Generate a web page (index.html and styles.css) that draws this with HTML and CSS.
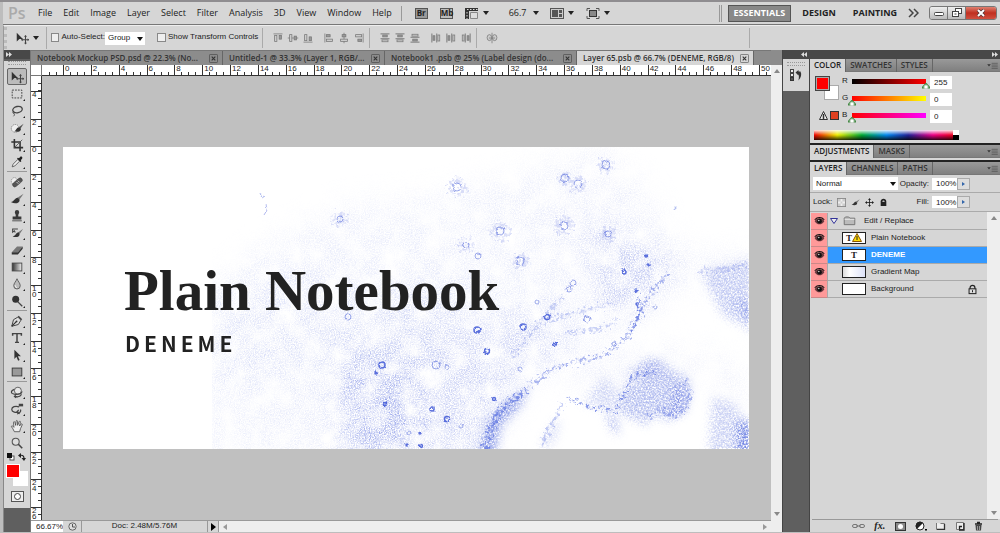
FILE: index.html
```html
<!DOCTYPE html>
<html lang="en">

<head>
  <meta charset="UTF-8">
  <meta name="viewport" content="width=device-width, initial-scale=1.0">
  <title>Layer 65.psb @ 66.7% (DENEME, RGB/8)</title>
  <link rel="stylesheet" href="styles.css">
</head>
<body>
  <!-- icon set -->
  <svg class="sprite" aria-hidden="true">
    <symbol id="i-move" viewBox="0 0 16 16"><path d="M2 2v10l3-3h4z" fill="#333"/><path d="M12 5.500v9M7.500 10h9" stroke="#444" stroke-width="1.200"/><path d="M12 4.500l-1.700 2h3.400zM12 15.500l-1.700-2h3.400zM6.800 10l2-1.700v3.400zM16 10l-1.600-1.700v3.400z" fill="#444"/></symbol>
    <symbol id="i-marquee" viewBox="0 0 16 16"><rect x="2.500" y="3.500" width="11" height="9" fill="none" stroke="#333" stroke-dasharray="2 1.300"/></symbol>
    <symbol id="i-lasso" viewBox="0 0 16 16"><ellipse cx="8.500" cy="6.500" rx="5.500" ry="3.600" fill="none" stroke="#444" stroke-width="1.500" transform="rotate(-12 8 6)"/><path d="M4.500 8.500c-2 1-1 2.500 0 2.300s1.500-1.600 0-1.800M4.500 11c1 1 .5 2-.5 3" fill="none" stroke="#444"/></symbol>
    <symbol id="i-quick" viewBox="0 0 16 16"><circle cx="6" cy="8.500" r="4.500" fill="#eee" stroke="#777" stroke-dasharray="1.500 1"/><path d="M15.500 3l-5.500 4 1.800 2z" fill="#555"/><path d="M10.500 7c-3.500 0-3 4-6 4.500 3.500 2 8 .5 8-2.500z" fill="#333"/></symbol>
    <symbol id="i-crop" viewBox="0 0 16 16"><path d="M5 1v10h10M1.500 4.500H11.500V15" fill="none" stroke="#333" stroke-width="1.800"/><path d="M5 11L14 2" stroke="#555"/></symbol>
    <symbol id="i-eyedrop" viewBox="0 0 16 16"><path d="M2.500 13.500l1-3L9 5l2 2-5.500 5.500z" fill="#eee" stroke="#555"/><path d="M8 4l4 4 1-1-.7-1.200C15 4 14.500 1 12 1.700L10.300 3.700 9 3z" fill="#222"/></symbol>
    <symbol id="i-heal" viewBox="0 0 16 16"><ellipse cx="5" cy="7" rx="3.500" ry="4" fill="#eee" stroke="#888" stroke-dasharray="1.500 1"/><rect x="2" y="6" width="13" height="5" rx="2.500" fill="#555" stroke="#333" stroke-width=".6" transform="rotate(-40 8.500 8.500)"/><path d="M7.500 8l2 2M9 6.500l2 2" stroke="#ddd"/></symbol>
    <symbol id="i-brush" viewBox="0 0 16 16"><path d="M15.500 2L8.500 6.500l2 2.500z" fill="#777"/><path d="M9 6.500c-3.500-.2-3.500 4-8 5 4.500 2.700 10 1.500 10-2.500z" fill="#333"/></symbol>
    <symbol id="i-stamp" viewBox="0 0 16 16"><path d="M6.500 8.500C7 6 5.500 5.500 5.500 3.700a2.500 2.500 0 015 0C10.500 5.500 9 6 9.500 8.500H13V12H3V8.500z" fill="#3a3a3a"/><path d="M2.500 13.500h11" stroke="#444"/></symbol>
    <symbol id="i-history" viewBox="0 0 16 16"><path d="M15 3L9.500 7l1.600 2z" fill="#777"/><path d="M10 7c-3 0-3 3.500-7 5 4 1.500 8 .5 8-3z" fill="#333"/><path d="M2.500 3.500H9M3 3v4l2-1.500 1 2" fill="none" stroke="#444" stroke-width="1.200"/></symbol>
    <symbol id="i-eraser" viewBox="0 0 16 16"><path d="M2 10.500L8 4h6.500L9 10.500z" fill="#777"/><path d="M2 10.500h7v2.500H2zM9 10.500L14.500 4v2.500L9 13z" fill="#333"/></symbol>
    <symbol id="i-gradient" viewBox="0 0 16 16"><linearGradient id="g1"><stop stop-color="#333"/><stop offset="1" stop-color="#eee"/></linearGradient><rect x="2.500" y="3.500" width="11" height="9" fill="url(#g1)" stroke="#444"/></symbol>
    <symbol id="i-drop" viewBox="0 0 16 16"><path d="M8 2c1 3 3.700 5 3.700 8A3.700 3.700 0 018 13.700 3.700 3.700 0 014.300 10C4.300 7 7 5 8 2z" fill="#bbb" stroke="#555"/><path d="M6 9.500c0 1.500.8 2.500 2 2.500" fill="none" stroke="#fff"/></symbol>
    <symbol id="i-dodge" viewBox="0 0 16 16"><circle cx="6.500" cy="6" r="4" fill="#333"/><path d="M9 9l5 5" stroke="#444" stroke-width="1.500"/></symbol>
    <symbol id="i-pen" viewBox="0 0 16 16"><path d="M2 14l2-7.500 5-3 3.500 3.500-3 5z" fill="#ddd" stroke="#333"/><path d="M2 14l5.500-5.500M9.500 2.500l4 4" stroke="#333" stroke-width="1.300"/><circle cx="7.500" cy="8.500" r="1" fill="#333"/></symbol>
    <symbol id="i-type" viewBox="0 0 16 16"><path d="M3 5.500V3h10v2.500M8 3v10M5.700 13h4.600" fill="none" stroke="#444" stroke-width="1.700"/></symbol>
    <symbol id="i-path" viewBox="0 0 16 16"><path d="M5 2v10.500L7.300 10l2 4.500 1.700-.8-2-4.200h3.500z" fill="#333"/></symbol>
    <symbol id="i-shape" viewBox="0 0 16 16"><rect x="2.500" y="3.500" width="11" height="9" fill="#999" stroke="#333"/></symbol>
    <symbol id="i-3d" viewBox="0 0 16 16"><circle cx="9" cy="6.500" r="4" fill="#e8e8e8" stroke="#555"/><path d="M5 5C0 7 1 10 5 10.500c4 .7 8-.5 9-3M12 9c2 2 0 4-3 4.500l-4-.5m1.500-1.500L5 13l2 1.500" fill="none" stroke="#444" stroke-width="1.300"/></symbol>
    <symbol id="i-3dcam" viewBox="0 0 16 16"><path d="M10.500 5.500C6 4 2 5.500 2 8.500s5 4 8 3M12 8.500c1 2-1 4.500-4 5M10 9l-2 2 3 2.500" fill="none" stroke="#444" stroke-width="1.400"/><path d="M10 2h5v3h-5z" fill="#444"/></symbol>
    <symbol id="i-hand" viewBox="0 0 16 16"><path d="M5 14.500C4 12 2.500 10 1.500 8.500c.8-1.200 2-.3 3 1L4 4c0-1.400 1.400-1.200 1.700 0l.8 3.300L7 2.500c.2-1.200 1.500-1 1.600.1l.1 4.600L10.500 3c.6-1 1.700-.5 1.400.6l-1 4.400 1.800-2.200c.8-.8 1.700 0 1.200 1L12 11l-1 3.500z" fill="#eee" stroke="#444" stroke-width=".9"/></symbol>
    <symbol id="i-zoom" viewBox="0 0 16 16"><circle cx="6.500" cy="6.500" r="4" fill="#ddd" stroke="#555" stroke-width="1.200"/><path d="M9.500 9.500l4.500 4.500" stroke="#444" stroke-width="1.800"/></symbol>
    <symbol id="i-alt" viewBox="0 0 16 16"><path d="M2 2.500h12" stroke="#777"/><rect x="3.500" y="4.500" width="3" height="8" fill="#ccc" stroke="#777"/><rect x="9.500" y="4.500" width="3" height="5" fill="#999" stroke="#777"/></symbol>
    <symbol id="i-alm" viewBox="0 0 16 16"><path d="M1 8h14" stroke="#777"/><rect x="3.500" y="3.500" width="3" height="9" fill="#ccc" stroke="#777"/><rect x="9.500" y="5.500" width="3" height="5" fill="#999" stroke="#777"/></symbol>
    <symbol id="i-dist" viewBox="0 0 16 16"><path d="M2 2.500h12M2 9h12" stroke="#777" stroke-width="1.300"/><rect x="5" y="4" width="6" height="2.500" fill="#999" stroke="#777"/><rect x="4" y="10.500" width="8" height="2.500" fill="#ccc" stroke="#777"/></symbol>
    <symbol id="i-auto" viewBox="0 0 16 16"><path d="M8 1v14" stroke="#777"/><ellipse cx="4.500" cy="7.500" rx="3" ry="4" fill="#ccc" stroke="#777"/><ellipse cx="11.500" cy="7.500" rx="3" ry="4" fill="#ccc" stroke="#777"/><path d="M4 8h8" stroke="#777"/></symbol>
    <symbol id="i-eye" viewBox="0 0 16 16"><path d="M1 7.500C4 2 12 2 15 7.500c-3 6-11 6-14 0z" fill="#6b3a3f"/><circle cx="8" cy="7.500" r="3.400" fill="#111"/><circle cx="7" cy="6.500" r="1" fill="#eee"/><path d="M1 5.500C5 1 11 1 15 5.500" fill="none" stroke="#111" stroke-width="1.500"/></symbol>
    <symbol id="i-lock" viewBox="0 0 16 16"><path d="M4.500 8V5.500C4.500 1 11.500 1 11.500 5.500V8" fill="none" stroke="#222" stroke-width="1.800"/><rect x="3" y="7" width="10" height="7" fill="#ddd" stroke="#222" stroke-width="1.500"/><path d="M8 9v3" stroke="#222" stroke-width="1.500"/></symbol>
    <symbol id="i-lockall" viewBox="0 0 16 16"><path d="M3 14V6c0-6 10-6 10 0v8z" fill="#222"/><path d="M6 7V6c0-2 4-2 4 0v1z" fill="#bbb"/></symbol>
    <symbol id="i-cross" viewBox="0 0 16 16"><path d="M8 2v12M2 8h12" stroke="#222" stroke-width="1.500"/><path d="M8 0L5.500 3.500h5zM8 16l-2.500-3.500h5zM0 8l3.500-2.500v5zM16 8l-3.500-2.500v5z" fill="#222"/></symbol>
    <symbol id="i-folder" viewBox="0 0 16 12"><path d="M1.500 10.500v-8L3 1h4l1.500 1.500h6v8z" fill="#bbb" stroke="#666"/><path d="M2 4h12" stroke="#eee"/></symbol>
    <symbol id="i-x" viewBox="0 0 10 10"><rect x=".5" y=".5" width="9" height="9" rx="1" fill="none" stroke="currentColor" opacity=".6"/><path d="M3 3l4 4M7 3L3 7" stroke="currentColor" stroke-width="1.200"/></symbol>
    <symbol id="i-menu" viewBox="0 0 12 8"><path d="M0 2.500h4L2 5z" fill="#333"/><path d="M5 1.500h7M5 3.500h7M5 5.500h7M5 7.500h7" stroke="#555" stroke-width=".8"/></symbol>
  </svg>

  <header class="menubar">
    <span class="logo">Ps</span>
    <nav class="menus">
      <a href="#">File</a>
      <a href="#">Edit</a>
      <a href="#">Image</a>
      <a href="#">Layer</a>
      <a href="#">Select</a>
      <a href="#">Filter</a>
      <a href="#">Analysis</a>
      <a href="#">3D</a>
      <a href="#">View</a>
      <a href="#">Window</a>
      <a href="#">Help</a>
    </nav>
    <div class="appbar">
      <button class="badge">Br</button>
      <button class="badge badge-mb">Mb</button>
      <button class="drop" aria-label="View Extras"><svg width="14" height="13" viewBox="0 0 14 13"><path d="M0 1h13v3H4v8H0z" fill="#333"/><path d="M2 2.500h11" stroke="#ddd" stroke-dasharray="1.500 1.500"/><path d="M2 5v7" stroke="#ddd" stroke-dasharray="1.500 1.500"/><path d="M5.500 5.500h7v6h-7z" fill="#ddd" stroke="#888"/></svg><i class="caret"></i></button>
      <button class="drop zoomlevel">66.7<i class="caret"></i></button>
      <button class="drop" aria-label="Arrange Documents"><svg width="14" height="13" viewBox="0 0 14 13"><rect x=".5" y="1.500" width="13" height="10" fill="#ccc" stroke="#555"/><path d="M2 3h6v7H2zM9 3h3v3H9zM9 7h3v3H9z" fill="#555"/></svg><i class="caret"></i></button>
      <button class="drop" aria-label="Screen Mode"><svg width="14" height="13" viewBox="0 0 14 13"><path d="M1 4V1.500h3M10 1.500h3V4M1 9v2.500h3M10 11.500h3V9" fill="none" stroke="#555"/><rect x="3.500" y="3.500" width="7" height="6" fill="#888" stroke="#333"/></svg><i class="caret"></i></button>
    </div>
    <div class="spaces">
      <button class="space active">ESSENTIALS</button>
      <button class="space">DESIGN</button>
      <button class="space">PAINTING</button>
      <button class="more" aria-label="More workspaces"><svg width="11" height="10" viewBox="0 0 11 10"><path d="M1 1l4 4-4 4M6 1l4 4-4 4" fill="none" stroke="#444" stroke-width="1.500"/></svg></button>
    </div>
    <div class="winbtns">
      <button aria-label="Minimize"><svg width="10" height="8"><rect x=".5" y="3.500" width="9" height="3" rx="1" fill="#fff" stroke="#444"/></svg></button>
      <button aria-label="Restore"><svg width="10" height="10"><rect x="3.500" y=".5" width="6" height="5" fill="#fff" stroke="#444"/><rect x=".5" y="3.500" width="6" height="5" fill="#fff" stroke="#444"/><path d="M2.500 6h2" stroke="#444"/></svg></button>
      <button class="close" aria-label="Close"><svg width="10" height="8"><path d="M2 1l6 6M8 1L2 7" stroke="#533" stroke-width="3.500"/><path d="M2 1l6 6M8 1L2 7" stroke="#fff" stroke-width="2"/></svg></button>
    </div>
  </header>

  <div class="options">
    <div class="opt-tool"><svg width="14" height="14"><use href="#i-move"/></svg><i class="caret"></i></div>
    <label class="check auto"><input type="checkbox">Auto-Select:</label>
    <span class="pick group"><select aria-label="Auto-Select target"><option>Group</option><option>Layer</option></select></span>
    <label class="check"><input type="checkbox">Show Transform Controls</label>
    <div class="align">
      <svg><use href="#i-alt"/></svg>
      <svg><use href="#i-alm"/></svg>
      <svg class="flip"><use href="#i-alt"/></svg>
    </div>
    <div class="align plain">
      <svg class="left"><use href="#i-alt"/></svg>
      <svg class="left"><use href="#i-alm"/></svg>
      <svg class="right"><use href="#i-alt"/></svg>
    </div>
    <div class="align">
      <svg><use href="#i-dist"/></svg>
      <svg><use href="#i-dist"/></svg>
      <svg class="flip"><use href="#i-dist"/></svg>
    </div>
    <div class="align plain">
      <svg class="left"><use href="#i-dist"/></svg>
      <svg class="left"><use href="#i-dist"/></svg>
      <svg class="right"><use href="#i-dist"/></svg>
    </div>
    <div class="align"><svg><use href="#i-auto"/></svg></div>
    <div class="opt-end"></div>
  </div>

  <main class="main">
    <aside class="tools">
      <div class="strip"><svg width="6" height="5"><path d="M0 0l3 2.500L0 5zM3 0l3 2.500L3 5z" fill="#ddd"/></svg></div>
      <div class="toolbox">
        <div class="grip"></div>
        <button class="tool active" aria-label="Move"><svg><use href="#i-move"/></svg></button>
        <button class="tool" aria-label="Marquee"><svg><use href="#i-marquee"/></svg></button>
        <button class="tool" aria-label="Lasso"><svg><use href="#i-lasso"/></svg></button>
        <button class="tool" aria-label="Quick Selection"><svg><use href="#i-quick"/></svg></button>
        <button class="tool" aria-label="Crop"><svg><use href="#i-crop"/></svg></button>
        <button class="tool" aria-label="Eyedropper"><svg><use href="#i-eyedrop"/></svg></button>
        <hr>
        <button class="tool" aria-label="Healing Brush"><svg><use href="#i-heal"/></svg></button>
        <button class="tool" aria-label="Brush"><svg><use href="#i-brush"/></svg></button>
        <button class="tool" aria-label="Clone Stamp"><svg><use href="#i-stamp"/></svg></button>
        <button class="tool" aria-label="History Brush"><svg><use href="#i-history"/></svg></button>
        <button class="tool" aria-label="Eraser"><svg><use href="#i-eraser"/></svg></button>
        <button class="tool" aria-label="Gradient"><svg><use href="#i-gradient"/></svg></button>
        <button class="tool" aria-label="Blur"><svg><use href="#i-drop"/></svg></button>
        <button class="tool" aria-label="Dodge"><svg><use href="#i-dodge"/></svg></button>
        <hr>
        <button class="tool" aria-label="Pen"><svg><use href="#i-pen"/></svg></button>
        <button class="tool" aria-label="Type"><svg><use href="#i-type"/></svg></button>
        <button class="tool" aria-label="Path Selection"><svg><use href="#i-path"/></svg></button>
        <button class="tool" aria-label="Rectangle"><svg><use href="#i-shape"/></svg></button>
        <hr>
        <button class="tool" aria-label="3D Rotate"><svg><use href="#i-3d"/></svg></button>
        <button class="tool" aria-label="3D Orbit"><svg><use href="#i-3dcam"/></svg></button>
        <button class="tool" aria-label="Hand"><svg><use href="#i-hand"/></svg></button>
        <button class="tool last" aria-label="Zoom"><svg><use href="#i-zoom"/></svg></button>
        <div class="mini">
          <svg width="8" height="8"><rect x="3" y="3" width="4" height="4" fill="#fff" stroke="#555"/><rect width="5" height="5" fill="#111"/></svg>
          <svg width="8" height="8"><path d="M2 2.500c3-1 4 1 4 3" fill="none" stroke="#222" stroke-width="1.200"/><path d="M0 2.500L3 0v5zM3.500 5h4.500L6 8z" fill="#222"/></svg>
        </div>
        <div class="inks"><i class="bg"></i><i class="fg"></i></div>
        <button class="mask" aria-label="Quick Mask"><svg width="13" height="11"><rect x=".5" y=".5" width="12" height="10" fill="#eee" stroke="#555"/><circle cx="6.500" cy="5.500" r="3" fill="#fff" stroke="#444"/></svg></button>
      </div>
    </aside>

    <section class="editor">
      <div class="tabs">
        <div class="tab wide">Notebook Mockup PSD.psd @ 22.3% (No...<svg><use href="#i-x"/></svg></div>
        <div class="tab">Untitled-1 @ 33.3% (Layer 1, RGB/...<svg><use href="#i-x"/></svg></div>
        <div class="tab wide">Notebook1 .psb @ 25% (Label design (do...<svg><use href="#i-x"/></svg></div>
        <div class="tab mid active">Layer 65.psb @ 66.7% (DENEME, RGB/8)<svg><use href="#i-x"/></svg></div>
      </div>
      <div class="stage">
        <div class="corner"></div>
        <div class="ruler-x"><span></span><span>0</span><span>2</span><span>4</span><span>6</span><span>8</span><span>10</span><span>12</span><span>14</span><span>16</span><span>18</span><span>20</span><span>22</span><span>24</span><span>26</span><span>28</span><span>30</span><span>32</span><span>34</span><span>36</span><span>38</span><span>40</span><span>42</span><span>44</span><span>46</span><span>48</span><span>50</span></div>
        <div class="ruler-y"><span></span><span>4</span><span>2</span><span>0</span><span>2</span><span>4</span><span>6</span><span>8</span><span>10</span><span>12</span><span>14</span><span>16</span><span>18</span><span>20</span><span>22</span><span>24</span><span>26</span></div>
        <div class="pasteboard">
          <div class="paper">
            <svg class="wash" viewBox="0 0 686 302" preserveAspectRatio="xMidYMid slice" aria-hidden="true">
              <defs>
                <filter id="soft" x="0" y="0" width="686" height="302" filterUnits="userSpaceOnUse" color-interpolation-filters="sRGB">
                  <feGaussianBlur in="SourceGraphic" stdDeviation="15" result="b"/>
                  <feTurbulence type="fractalNoise" baseFrequency=".8" numOctaves="3" seed="4"/>
                  <feColorMatrix values="0 0 0 0 1  0 0 0 0 1  0 0 0 0 1  2.200 0 0 0 -.7" result="n"/>
                  <feTurbulence type="fractalNoise" baseFrequency=".05" numOctaves="4" seed="9"/>
                  <feColorMatrix values="0 0 0 0 1  0 0 0 0 1  0 0 0 0 1  2 0 0 0 -.3" result="c"/>
                  <feComposite in="b" in2="n" operator="in" result="d"/>
                  <feComposite in="d" in2="c" operator="in"/>
                </filter>
                <filter id="firm" x="0" y="0" width="686" height="302" filterUnits="userSpaceOnUse" color-interpolation-filters="sRGB">
                  <feGaussianBlur in="SourceGraphic" stdDeviation="5" result="b"/>
                  <feTurbulence type="fractalNoise" baseFrequency=".6" numOctaves="3" seed="7" result="t"/>
                  <feColorMatrix values="0 0 0 0 1  0 0 0 0 1  0 0 0 0 1  2.400 0 0 0 -.6" result="n"/>
                  <feDisplacementMap in="b" in2="t" scale="8" xChannelSelector="R" yChannelSelector="G" result="d"/>
                  <feComposite in="d" in2="n" operator="in"/>
                </filter>
                <filter id="edge" x="0" y="0" width="686" height="302" filterUnits="userSpaceOnUse" color-interpolation-filters="sRGB">
                  <feTurbulence type="fractalNoise" baseFrequency=".3" numOctaves="3" seed="3" result="t"/>
                  <feColorMatrix values="0 0 0 0 1  0 0 0 0 1  0 0 0 0 1  0 4 0 0 -1.500" result="n"/>
                  <feDisplacementMap in="SourceGraphic" in2="t" scale="12" xChannelSelector="R" yChannelSelector="B" result="d"/>
                  <feComposite in="d" in2="n" operator="in"/>
                  <feGaussianBlur stdDeviation=".6"/>
                </filter>
                <filter id="wobble" x="0" y="0" width="686" height="302" filterUnits="userSpaceOnUse">
                  <feTurbulence type="fractalNoise" baseFrequency=".3" numOctaves="2" seed="5" result="t"/>
                  <feDisplacementMap in="SourceGraphic" in2="t" scale="3" xChannelSelector="R" yChannelSelector="G"/>
                  <feGaussianBlur stdDeviation=".4"/>
                </filter>
                <clipPath id="sheet"><path d="M149 0H686V302H149z"/></clipPath>
              </defs>
              <g clip-path="url(#sheet)">
                <g filter="url(#soft)" fill="#6477e0">
                  <path d="M140 150L200 100 280 60 380 50 540 0 580 40 610 100 590 140 540 200 450 240 420 310H250L140 310z" opacity=".14"/>
                  <path d="M140 150L230 120 330 140 400 200 300 230 140 230z" opacity=".1"/>
                  <path d="M310 185L430 180 480 150 500 190 450 240 425 310H285L275 245z" opacity=".26"/>
                  <path d="M280 200L340 230 370 310H275z" opacity=".45"/>
                  <ellipse cx="372" cy="155" rx="35" ry="10" opacity=".45"/>
                  <path d="M520 80L570 95 610 110 590 160 550 170 535 130z" opacity=".38"/>
                  <path d="M600 112h86v20h-86z" opacity=".25"/>
                  <path d="M480 225l110-20 70 5 26 40v20L640 220 560 240z" opacity=".18"/>
                </g>
                <g filter="url(#firm)" fill="#4f66dc">
                  <path d="M640 126L690 112V182L660 168z" opacity=".34"/>
                  <path d="M672 150L690 155V188z" opacity=".45"/>
                  <path d="M560 242L600 216 628 234 624 262 606 274 590 266 585 278 558 266z" opacity=".42"/>
                  <path d="M612 235l15 10-6 20-13 6z" opacity=".45"/>
                  <path d="M415 310L425 275 440 257 466 240 458 258 438 278 431 310z" opacity=".7"/>
                  <path d="M646 310L650 250 670 255 690 285V310z" opacity=".3"/>
                  <path d="M675 275h15v35h-14z" opacity=".8"/>
                  <path d="M520 256l20-26 8 4 14 24-12 6z" opacity=".25"/>
                  <path d="M543 265l10 6 4 18-8-8z" opacity=".6"/>
                  <path d="M478 300l12-24 8-4-4 18-10 12z" opacity=".25"/>
                  <path d="M560 228l28-16 14 3-16 12z" opacity=".5"/>
                </g>
                <g filter="url(#edge)" fill="none" stroke="#5a70e0">
                  <path d="M422 304C428 272 440 252 466 244" stroke-width="6" opacity=".7"/>
                  <path d="M466 240C485 222 500 216 525 213 550 207 570 190 577 165 585 150 590 140 604 128" stroke-width="4" opacity=".5"/>
                  <path d="M575 150C580 160 576 175 566 183" stroke-width="5" opacity=".6"/>
                  <path d="M505 252C520 254 526 264 535 260L552 265 562 245 568 232 592 224" stroke-width="3" opacity=".7"/>
                  <path d="M622 232C632 245 626 262 610 270L596 262 586 270" stroke-width="4" opacity=".5"/>
                  <path d="M480 176C500 165 530 165 550 155M500 188C520 180 540 190 555 170" stroke-width="4" opacity=".3"/>
                  <path d="M450 210C465 190 480 168 500 150" stroke-width="4" opacity=".3"/>
                  <path d="M500 255L490 275 478 300" stroke-width="4" opacity=".35"/>
                  <path d="M635 125l50-6" stroke-width="6" opacity=".25"/>
                  <g stroke-width="6" opacity=".22">
                    <circle cx="394" cy="40" r="7"/><circle cx="277" cy="72" r="5"/><circle cx="403" cy="98" r="5"/><circle cx="502" cy="31" r="4"/><circle cx="515" cy="37" r="6"/><circle cx="501" cy="79" r="7"/><circle cx="437" cy="85" r="7"/><circle cx="458" cy="114" r="5"/><circle cx="543" cy="18" r="5"/><circle cx="545" cy="87" r="5"/>
                  </g>
                </g>
                <g filter="url(#wobble)" fill="none" stroke="#3d56d6">
                  <path d="M197 46l2 5 3-2M203 57l1 6-3 5" opacity=".4"/>
                  <g opacity=".5">
                    <circle cx="394" cy="40" r="4"/><circle cx="277" cy="72" r="3"/><circle cx="403" cy="98" r="3"/><circle cx="502" cy="31" r="4"/><circle cx="515" cy="37" r="4"/><circle cx="501" cy="79" r="4"/><circle cx="437" cy="84" r="4"/><circle cx="457" cy="114" r="4"/><circle cx="543" cy="18" r="4"/><circle cx="545" cy="87" r="3"/><circle cx="415" cy="109" r="3"/><circle cx="474" cy="155" r="2"/><circle cx="524" cy="172" r="3"/><circle cx="373" cy="218" r="4"/><circle cx="384" cy="220" r="2"/><circle cx="398" cy="279" r="2"/><circle cx="346" cy="286" r="2"/><circle cx="506" cy="142" r="3"/><circle cx="510" cy="136" r="3"/><circle cx="457" cy="222" r="2"/><circle cx="551" cy="197" r="2"/><circle cx="612" cy="61" r="1"/><circle cx="285" cy="170" r="3"/><circle cx="592" cy="160" r="2"/>
                  </g>
                  <g stroke-width="1.500" opacity=".85">
                    <circle cx="319" cy="218" r="3"/><circle cx="313" cy="226" r="1"/><circle cx="322" cy="257" r="1.500"/><circle cx="369" cy="262" r="2"/><circle cx="384" cy="272" r="2.500"/><circle cx="414" cy="183" r="3"/><circle cx="358" cy="299" r="1.500"/><circle cx="344" cy="298" r="1"/><circle cx="424" cy="204" r="2.500"/><circle cx="460" cy="180" r="3"/><circle cx="484" cy="170" r="2.500"/><circle cx="492" cy="197" r="1.500"/><circle cx="561" cy="125" r="2"/><circle cx="573" cy="144" r="1"/><circle cx="583" cy="109" r="1"/><circle cx="585" cy="118" r="1"/><circle cx="431" cy="252" r="1.500"/><circle cx="357" cy="286" r="1"/><circle cx="574" cy="157" r="1"/>
                  </g>
                </g>
              </g>
            </svg>
            <h1>Plain Notebook</h1>
            <p>DENEME</p>
          </div>
        </div>
      </div>
      <div class="status">
        <input class="percent" type="text" value="66.67%" aria-label="Zoom">
        <span class="clock"><svg width="9" height="9"><circle cx="4.500" cy="4.500" r="3.700" fill="#ddd" stroke="#666"/><path d="M4.500 2v3h2.500" fill="none" stroke="#555"/></svg></span>
        <span class="docsize">Doc: 2.48M/5.76M</span>
        <button class="play" aria-label="Status options"><svg width="5" height="8"><path d="M0 0l5 4-5 4z"/></svg></button>
        <div class="hscroll"><svg width="4" height="6"><path d="M4 0L0 3l4 3z" fill="#999"/></svg><svg width="4" height="6"><path d="M0 0l4 3-4 3z" fill="#999"/></svg></div>
      </div>
    </section>

    <div class="vscroll"><svg width="6" height="4"><path d="M0 4l3-4 3 4z" fill="#888"/></svg><svg width="6" height="4"><path d="M0 0h6L3 4z" fill="#888"/></svg></div>

    <aside class="dock">
      <div class="strip"><svg width="6" height="5"><path d="M3 0L0 2.500 3 5zM6 0L3 2.500 6 5z" fill="#ddd"/></svg><svg width="6" height="5"><path d="M0 0l3 2.500L0 5zM3 0l3 2.500L3 5z" fill="#ddd"/></svg></div>
      <div class="dock-body">
        <div class="iconbar">
          <div class="iconbox">
            <div class="grip"></div>
            <button aria-label="History"><svg width="12" height="13"><rect x=".5" y=".5" width="3" height="3" fill="#eee" stroke="#444"/><rect x=".5" y="4.500" width="3" height="3" fill="#eee" stroke="#444"/><rect x=".5" y="8.500" width="3" height="3" fill="#555" stroke="#333"/><path d="M5.500 3.500L8.500 1v1.500h2c1.500 3 .5 6-2 9 .5-3 .5-5 0-6.500v1.500z" fill="#333"/></svg></button>
          </div>
        </div>
        <div class="panels">
          <section class="panel">
            <div class="ptabs"><button class="on">COLOR</button><button>SWATCHES</button><button>STYLES</button><svg><use href="#i-menu"/></svg></div>
            <div class="color">
              <div class="chips">
                <div class="pair"><i class="back"></i><i class="front"></i></div>
                <div class="warn"><svg width="9" height="9"><path d="M4.500 .500L8.500 8.500H.500z" fill="#eee" stroke="#333"/><path d="M4.500 3v5" stroke="#333" stroke-width="1.500"/></svg><i></i></div>
              </div>
              <div class="channels">
                <label for="r">R</label><input id="r" class="red" type="range" max="255" value="255"><input type="text" value="255" aria-label="R value">
                <label for="g">G</label><input id="g" class="green" type="range" max="255" value="0"><input type="text" value="0" aria-label="G value">
                <label for="b">B</label><input id="b" class="blue" type="range" max="255" value="0"><input type="text" value="0" aria-label="B value">
              </div>
            </div>
            <div class="spectrum"><i></i></div>
          </section>
          <section class="panel closed">
            <div class="ptabs"><button class="on">ADJUSTMENTS</button><button>MASKS</button><svg><use href="#i-menu"/></svg></div>
          </section>
          <section class="panel layers">
            <div class="ptabs"><button class="on">LAYERS</button><button>CHANNELS</button><button>PATHS</button><svg><use href="#i-menu"/></svg></div>
            <div class="lrow">
              <span class="pick blend"><select aria-label="Blend mode"><option>Normal</option><option>Multiply</option></select></span>
              <label for="opacity">Opacity:</label>
              <input id="opacity" type="text" value="100%"><button class="step" aria-label="Opacity slider"><i></i></button>
            </div>
            <div class="lrow locks">
              <span>Lock:</span>
              <svg viewBox="0 0 10 10"><rect x=".5" y=".5" width="9" height="9" fill="#eee" stroke="#888"/><path d="M1 1h3v3H1zM6 1h3v3H6zM4 4h2v2H4zM1 6h3v3H1zM6 6h3v3H6z" fill="#ccc"/></svg>
              <svg><use href="#i-brush"/></svg>
              <svg><use href="#i-cross"/></svg>
              <svg><use href="#i-lockall"/></svg>
              <label for="fill">Fill:</label>
              <input id="fill" type="text" value="100%"><button class="step" aria-label="Fill slider"><i></i></button>
            </div>
            <div class="list">
              <ul>
                <li><span class="eye"><svg><use href="#i-eye"/></svg></span><div class="layer folder"><svg width="8" height="6"><path d="M.5 .5h7L4 5.500z" fill="#eee" stroke="#339"/></svg><svg class="fold"><use href="#i-folder"/></svg>Edit / Replace</div></li>
                <li><span class="eye"><svg><use href="#i-eye"/></svg></span><div class="layer"><span class="thumb">T<svg width="10" height="9"><path d="M5 .500L9.500 8.500H.500z" fill="#fd0" stroke="#850"/><path d="M5 3v4" stroke="#222"/></svg></span>Plain Notebook</div></li>
                <li class="sel"><span class="eye"><svg><use href="#i-eye"/></svg></span><div class="layer"><span class="thumb">T</span>DENEME</div></li>
                <li><span class="eye"><svg><use href="#i-eye"/></svg></span><div class="layer"><span class="thumb map"></span>Gradient Map</div></li>
                <li><span class="eye"><svg><use href="#i-eye"/></svg></span><div class="layer"><span class="thumb"></span>Background<svg class="lock"><use href="#i-lock"/></svg></div></li>
              </ul>
              <div class="lscroll"><svg width="6" height="4"><path d="M0 4l3-4 3 4z" fill="#888"/></svg><svg width="6" height="4"><path d="M0 0h6L3 4z" fill="#888"/></svg></div>
            </div>
            <div class="lfoot">
              <button aria-label="Link layers"><svg width="13" height="8"><rect x=".5" y="2.500" width="5" height="3" rx="1.500" fill="none" stroke="#777"/><rect x="7.500" y="2.500" width="5" height="3" rx="1.500" fill="none" stroke="#777"/><path d="M4 4h5" stroke="#777"/></svg></button>
              <button class="fx">fx.</button>
              <button aria-label="Add mask"><svg width="11" height="9"><rect x=".5" y=".5" width="10" height="8" fill="#888" stroke="#333"/><circle cx="5.500" cy="4.500" r="2.500" fill="#fff"/></svg></button>
              <button aria-label="Adjustment layer"><svg width="12" height="10"><circle cx="5" cy="5" r="4" fill="#fff" stroke="#222"/><path d="M2 8A4 4 0 018 2z" fill="#222"/><path d="M10 8h2v1.500h-2z"/></svg></button>
              <button aria-label="New group"><svg width="10" height="8"><path d="M.5 1v6.500h8V1.500h-4" fill="#eee" stroke="#777"/><path d="M8.500 2v5.500H1" fill="none" stroke="#333" stroke-width="1.300"/></svg></button>
              <button aria-label="New layer"><svg width="9" height="9"><path d="M.5 .5h7v7h-7z" fill="#eee" stroke="#777"/><path d="M3 8h5V1M3.500 7V4.500H6" fill="none" stroke="#222" stroke-width="1.300"/></svg></button>
              <button aria-label="Delete"><svg width="9" height="10"><path d="M1 3h7M3 1.500h3" stroke="#222" stroke-width="1.300"/><path d="M1.500 4h6L7 9.500H2z" fill="#444"/><path d="M3.500 5v4M5.500 5v4" stroke="#bbb" stroke-width=".7"/></svg></button>
            </div>
          </section>
        </div>
      </div>
    </aside>
  </main>
</body>
</html>
```
FILE: styles.css
```css
* {
  box-sizing: border-box;
}

body {
  margin: 0;
  height: 100vh;
  display: flex;
  flex-direction: column;
  overflow: hidden;
  padding: 0 0 1px 3px;
  border-top: 2px solid #8f8d90;
  background: #bdbdbd;
  color: #222;
  font: 8px/10px "Liberation Sans", Arial, sans-serif;
}

button,
input,
select {
  font: inherit;
  color: inherit;
  margin: 0;
  padding: 0;
  border: 0;
  background: none;
  border-radius: 0;
  appearance: none;
}

a {
  color: inherit;
  text-decoration: none;
}

svg {
  flex: none;
  display: block;
}

.sprite {
  position: absolute;
  width: 0;
  height: 0;
}

.caret {
  border: 3px solid transparent;
  border-top: 4px solid #222;
  border-bottom: 0;
}

/* menu bar */
.menubar {
  height: 23px;
  flex: none;
  display: flex;
  align-items: center;
  background: #d6d6d6;
  border-bottom: 1px solid #777;
  font-family: "Open Sans", sans-serif;
  font-size: 9px;
}

.logo {
  width: 35px;
  padding-left: 5px;
  font-size: 16px;
  font-weight: 600;
  color: #aaa;
}

.menus {
  display: flex;
  gap: 11px;
}

.appbar {
  display: flex;
  align-items: center;
  height: 15px;
  margin-left: 9px;
  padding-left: 13px;
  border-left: 1px solid #999;
}

.badge {
  width: 13px;
  height: 11px;
  margin-right: 12px;
  border: 1px solid #555;
  background: #999;
  font-size: 8px;
  line-height: 8px;
  font-weight: bold;
}

.badge-mb {
  background: #bbb;
}

.drop {
  display: flex;
  align-items: center;
  gap: 4px;
  margin-right: 12px;
}

.zoomlevel {
  gap: 7px;
  margin: 0 11px 0 8px;
}

.spaces {
  display: flex;
  align-items: center;
  height: 17px;
  margin-left: auto;
  padding-left: 6px;
  border-left: 3px double #999;
  font-weight: bold;
}

.space {
  height: 17px;
  padding: 0 6px;
  margin-right: 5px;
}

.space.active {
  border: 1px solid #555;
  background: #888;
  color: #fff;
  padding: 0 5px;
}

.more {
  margin-right: 10px;
}

.winbtns {
  display: flex;
  margin-right: 3px;
  border: 1px solid #777;
  border-radius: 3px;
  overflow: hidden;
}

.winbtns button {
  width: 18px;
  height: 12px;
  display: grid;
  place-items: center;
  background: linear-gradient(#eee, #bbb);
  border-right: 1px solid #777;
}

.winbtns .close {
  width: 30px;
  border: 0;
  background: linear-gradient(#e08070, #c03020 50%, #d05040);
}

/* options bar */
.options {
  height: 25px;
  flex: none;
  display: flex;
  align-items: center;
  background: #d6d6d6;
  border-top: 1px solid #eee;
  border-left: 1px solid #999;
}

.opt-tool {
  height: 22px;
  width: 43px;
  display: flex;
  align-items: center;
  gap: 4px;
  padding-left: 8px;
  border-left: 3px dotted #bbb;
  border-right: 1px solid #aaa;
}

.check {
  display: flex;
  align-items: center;
  gap: 2px;
  padding-bottom: 2px;
  white-space: nowrap;
}

.check.auto {
  width: 54px;
  margin-left: 4px;
}

.check input {
  width: 9px;
  height: 9px;
  border: 1px solid #888;
  background: #eee;
}

.pick {
  position: relative;
}

.pick select {
  width: 100%;
  height: 100%;
  display: block;
  padding-left: 3px;
  background: #fff;
}

.pick::after {
  content: "";
  position: absolute;
  right: 2px;
  top: 5px;
  border: 3px solid transparent;
  border-top: 4px solid #111;
  border-bottom: 0;
}

.group {
  width: 40px;
  height: 13px;
  margin-right: 12px;
}

.align {
  height: 20px;
  display: flex;
  align-items: center;
  gap: 3px;
  margin-left: 4px;
  padding-left: 9px;
  border-left: 1px solid #aaa;
}

.align.plain {
  margin: 0;
  border: 0;
}

.align svg {
  width: 12px;
  height: 12px;
}

.align .flip {
  transform: scaleY(-1);
}

.align .left {
  transform: rotate(-90deg);
}

.align .right {
  transform: rotate(90deg);
}

.opt-end {
  width: 251px;
  height: 20px;
  margin-left: auto;
  border-left: 1px solid #aaa;
}

/* work area */
.main {
  flex: 1;
  min-height: 0;
  display: flex;
}

.strip {
  height: 9px;
  flex: none;
  display: flex;
  align-items: center;
  background: #484848;
}

.grip {
  height: 4px;
  margin: 2px 4px 3px;
  border-top: 1px dotted #999;
  border-bottom: 1px dotted #999;
}

.tools {
  width: 28px;
  flex: none;
  border-left: 1px solid #888;
  border-right: 1px solid #777;
  background: #5f5f5f;
}

.tools .strip {
  padding-left: 2px;
}

.toolbox {
  background: #d6d6d6;
  padding-bottom: 6px;
}

.tool {
  position: relative;
  width: 20px;
  height: 17px;
  display: grid;
  place-items: center;
  margin: 0 auto;
}

.tool svg {
  width: 14px;
  height: 14px;
}

.tool::after {
  content: "";
  position: absolute;
  right: 2px;
  bottom: 1px;
  border: 1px solid #222;
  border-top-color: transparent;
  border-left-color: transparent;
}

.tool.active {
  border: 1px solid #666;
  border-radius: 2px;
  background: #bbb;
}

.tool.active::after,
.tool.last::after {
  content: none;
}

.toolbox hr {
  height: 1px;
  margin: 1px 3px;
  border: 0;
  background: #999;
}

.mini {
  display: flex;
  justify-content: space-between;
  padding: 2px 4px 2px 3px;
}

.inks,
.pair {
  display: grid;
  grid-template-columns: 7px 7px 8px;
  grid-template-rows: 7px 7px 8px;
  margin: 1px 0 4px 2px;
}

.inks .bg,
.pair .back {
  grid-area: 2 / 2 / 4 / 4;
  background: #fff;
}

.inks .fg,
.pair .front {
  grid-area: 1 / 1 / 3 / 3;
  background: #f00;
  border: 1px solid #fff;
}

.mask {
  display: block;
  margin: 5px auto 0;
}

/* document window */
.editor {
  flex: 1;
  min-width: 0;
  display: flex;
  flex-direction: column;
}

.tabs {
  height: 15px;
  flex: none;
  display: flex;
  background: #8c8c8c;
  border-top: 1px solid #777;
  font-family: "Open Sans", sans-serif;
}

.tab {
  width: 162px;
  display: flex;
  align-items: center;
  justify-content: space-between;
  padding: 0 4px 0 6px;
  border-right: 1px solid #666;
  font-weight: 600;
  color: #333;
  white-space: nowrap;
}

.tab.wide {
  width: 192px;
}

.tab.mid {
  width: 177px;
}

.tab svg {
  width: 9px;
  height: 9px;
}

.tab.active {
  background: #d6d6d6;
}

.stage {
  flex: 1;
  min-height: 0;
  display: grid;
  grid-template-columns: 11px 1fr;
  grid-template-rows: 11px 1fr;
}

.corner {
  background: #fff;
  border-right: 1px solid #777;
  border-bottom: 1px solid #777;
}

.ruler-x,
.ruler-y {
  display: grid;
  background: #fff;
  font-size: 8px;
  line-height: 7px;
}

.ruler-x {
  grid-template-columns: 21px repeat(25, 1fr) 12px;
  border-bottom: 1px solid #333;
}

.ruler-x span {
  min-width: 0;
  padding-left: 1px;
  border-left: 1px solid #333;
  background: repeating-linear-gradient(to right, transparent 0 6px, #333 6px 7px) 0 100% / 100% 3px no-repeat;
}

.ruler-y {
  grid-template-rows: 15px repeat(15, 1fr) 13px;
  line-height: 6px;
  border-right: 1px solid #333;
}

.ruler-y span {
  min-height: 0;
  padding: 0 4px 0 1px;
  border-top: 1px solid #333;
  background: repeating-linear-gradient(to bottom, transparent 0 6px, #333 6px 7px) 100% 0 / 3px 100% no-repeat;
  word-break: break-all;
}

.ruler-x span:first-child,
.ruler-y span:first-child {
  border-color: transparent;
}

.pasteboard {
  display: flex;
  padding: 71px 22px 71px 21px;
  background: #c0c0c0;
}

.paper {
  position: relative;
  flex: 1;
  padding: 112px 0 0 61px;
  background: #fff;
  overflow: hidden;
}

.wash {
  position: absolute;
  inset: 0;
  width: 100%;
  height: 100%;
}

.paper h1,
.paper p {
  position: relative;
  margin: 0;
  color: #222;
}

.paper h1 {
  font: bold 57px/64px "Liberation Serif", serif;
}

.paper p {
  margin-top: 5px;
  padding-left: 1px;
  font: 700 21px/30px "Noto Sans CJK SC", sans-serif;
  letter-spacing: 4px;
}

.status {
  height: 12px;
  flex: none;
  display: flex;
  background: #d6d6d6;
  border-top: 1px solid #999;
}

.status .percent {
  width: 32px;
  padding-left: 5px;
  background: #fff;
}

.clock {
  width: 19px;
  display: grid;
  place-items: center;
  border-right: 1px solid #999;
}

.docsize {
  width: 125px;
  text-align: center;
}

.play {
  width: 12px;
  display: grid;
  place-items: center;
  border-left: 1px solid #999;
  border-right: 1px solid #999;
}

.hscroll {
  flex: 1;
  display: flex;
  align-items: center;
  justify-content: space-between;
  padding: 0 4px;
  background: #eee;
}

.vscroll,
.lscroll {
  width: 11px;
  flex: none;
  display: flex;
  flex-direction: column;
  align-items: center;
  justify-content: space-between;
  background: #eee;
}

.vscroll {
  padding: 4px 0 16px;
  border-top: 15px solid #8c8c8c;
}

/* right dock */
.dock {
  width: 218px;
  flex: none;
  display: flex;
  flex-direction: column;
  border-left: 1px solid #444;
}

.dock .strip {
  justify-content: space-between;
  padding: 0 2px 0 18px;
}

.dock-body {
  flex: 1;
  min-height: 0;
  display: flex;
}

.iconbar {
  width: 27px;
  background: #5f5f5f;
  border-right: 1px solid #444;
}

.iconbox {
  height: 32px;
  padding-top: 1px;
  background: #d6d6d6;
}

.iconbox button {
  display: block;
  margin: 0 auto;
}

.panels {
  flex: 1;
  display: flex;
  flex-direction: column;
  gap: 2px;
  background: #222;
}

.panel {
  background: #d6d6d6;
}

.panel.closed {
  padding-bottom: 2px;
}

.ptabs {
  height: 13px;
  display: flex;
  align-items: center;
  background: linear-gradient(#999, #808080);
  border-bottom: 1px solid #777;
  font-family: "Open Sans", sans-serif;
}

.ptabs button {
  height: 13px;
  padding: 0 4px;
  border-right: 1px solid #666;
  font-weight: 600;
  color: #333;
}

.ptabs .on {
  background: #d6d6d6;
  color: #222;
}

.ptabs svg {
  width: 11px;
  height: 7px;
  margin: 0 2px 0 auto;
}

.color {
  display: flex;
  padding: 4px 0 3px 5px;
}

.chips {
  width: 27px;
}

.pair {
  grid-template-columns: 9px 6px 9px;
  grid-template-rows: 9px 6px 9px;
  margin: 0;
}

.pair .front {
  border: 1px solid #444;
  outline: 1px solid #aaa;
  outline-offset: -2px;
}

.pair .back {
  border: 1px solid #aaa;
}

.warn {
  display: flex;
  gap: 2px;
  margin: 11px 0 0 4px;
}

.warn i {
  width: 9px;
  height: 9px;
  background: #e04020;
  border: 1px solid #333;
}

.channels {
  display: grid;
  grid-template-columns: 6px 82px 22px;
  grid-auto-rows: 17px;
  align-items: start;
}

.channels input[type=text] {
  height: 13px;
  padding-left: 4px;
  background: #fff;
}

.channels input[type=range] {
  width: 82px;
  height: 14px;
}

.channels input::-webkit-slider-runnable-track {
  height: 11px;
  background-image: linear-gradient(to right, #000, #f00);
  background-size: calc(100% - 8px) 5px;
  background-position: 4px 1px;
  background-repeat: no-repeat;
}

.channels .green::-webkit-slider-runnable-track {
  background-image: linear-gradient(to right, #f00, #ff0);
}

.channels .blue::-webkit-slider-runnable-track {
  background-image: linear-gradient(to right, #f00, #f0f);
}

.channels input::-webkit-slider-thumb {
  appearance: none;
  width: 8px;
  height: 6px;
  margin-top: 5px;
  background: radial-gradient(circle at 4px 4px, #fff 1px, #484 3px);
  clip-path: polygon(50% 0, 100% 70%, 100% 100%, 0 100%, 0 70%);
}

.spectrum {
  display: flex;
  justify-content: flex-end;
  height: 10px;
  margin: 0 41px 0 4px;
  background: linear-gradient(rgba(255, 255, 255, .9), transparent 50%, rgba(0, 0, 0, .8)), linear-gradient(to right, #e00, #ee0 16%, #0a3 33%, #08e 50%, #229 65%, #e08 82%, #e00);
}

.spectrum i {
  width: 6px;
  background: linear-gradient(#fff 50%, #000 50%);
}

.panel:first-child {
  padding-bottom: 3px;
}

.layers {
  flex: 1;
  min-height: 0;
  display: flex;
  flex-direction: column;
}

.lrow {
  height: 18px;
  flex: none;
  display: flex;
  align-items: center;
  padding: 0 30px 0 3px;
  border-bottom: 1px solid #aaa;
}

.blend {
  width: 85px;
  height: 13px;
}

.lrow label {
  margin-left: auto;
  padding-right: 3px;
}

.lrow input {
  width: 25px;
  height: 12px;
  padding-left: 4px;
  background: #fff;
}

.step {
  width: 13px;
  height: 12px;
  display: grid;
  place-items: center;
  border: 1px solid #aaa;
  background: #ddd;
}

.step i {
  border: 2px solid transparent;
  border-left: 3px solid #36a;
  border-right: 0;
}

.locks {
  height: 19px;
}

.locks svg {
  width: 9px;
  height: 9px;
  margin-left: 5px;
}

.list {
  flex: 1;
  min-height: 0;
  display: flex;
}

.list ul {
  flex: 1;
  margin: 1px 0 0;
  padding: 0 0 0 1px;
  list-style: none;
}

.list li {
  display: flex;
  height: 17px;
}

.eye {
  width: 17px;
  display: grid;
  place-items: center;
  background: #f99;
  border-right: 1px solid #aaa;
  border-bottom: 1px solid #c88;
}

.eye svg {
  width: 11px;
  height: 11px;
}

.layer {
  flex: 1;
  display: flex;
  align-items: center;
  padding-left: 14px;
  border-bottom: 1px solid #aaa;
}

.folder {
  padding-left: 2px;
}

.fold {
  width: 13px;
  height: 10px;
  margin: 0 8px 0 5px;
}

.thumb {
  width: 24px;
  height: 12px;
  display: flex;
  justify-content: center;
  margin-right: 5px;
  border: 1px solid #222;
  background: #fff;
  color: #222;
  font: bold 9px/10px "Liberation Serif", serif;
}

.map {
  background: linear-gradient(to right, #ddd, #fff 30%, #dde2f8);
}

.sel .layer {
  background: #39f;
  color: #fff;
  font-weight: bold;
}

.lock {
  width: 11px;
  height: 11px;
  margin: 0 9px 0 auto;
}

.lscroll {
  width: 13px;
  padding: 4px 0;
}

.lfoot {
  height: 13px;
  flex: none;
  display: flex;
  align-items: center;
  justify-content: space-between;
  margin: 0 2px;
  padding: 0 15px 0 40px;
  border-top: 1px solid #999;
}

.fx {
  font: italic bold 10px/10px "Liberation Serif", serif;
}
```
